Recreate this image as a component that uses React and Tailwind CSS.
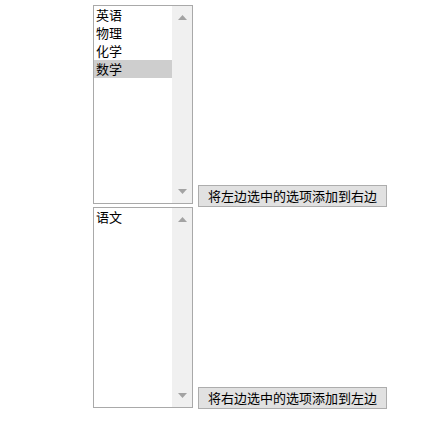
import React from "react";

const font = { fontFamily: '"Noto Sans CJK SC", "Microsoft YaHei", sans-serif' };

function ListBox({ items, selected, tall }) {
  return (
    <div
      className={
        "flex w-[100px] border border-[#a9a9a9] bg-white shrink-0 " +
        (tall ? "h-[201px] mb-[1px]" : "h-[199px] mb-[3px]")
      }
    >
      <div className="flex-1 flex flex-col">
        {items.map((it, i) => (
          <div
            key={it}
            className={
              "h-[18px] leading-[18px] pl-[2px] text-[13px] text-black " +
              (i === selected ? "bg-[#cecece]" : "")
            }
          >
            {it}
          </div>
        ))}
      </div>
      <div className="w-[20px] bg-[#f0f0f0] flex flex-col justify-between items-center py-[9px]">
        <svg width="9" height="5" viewBox="0 0 9 5">
          <polygon points="4.5,0 9,5 0,5" fill="#a3a3a3" />
        </svg>
        <svg width="9" height="5" viewBox="0 0 9 5">
          <polygon points="0,0 9,0 4.5,5" fill="#a3a3a3" />
        </svg>
      </div>
    </div>
  );
}

function Btn({ children }) {
  return (
    <button className="h-[22px] w-[189px] border border-[#adadad] bg-[#e1e1e1] text-[13px] leading-[20px] text-black text-center px-0">
      {children}
    </button>
  );
}

export default function App() {
  return (
    <div className="w-[431px] h-[437px] bg-white pl-[93px] pt-[5px]" style={font}>
      <div className="flex items-end gap-[5px]">
        <ListBox items={["英语", "物理", "化学", "数学"]} selected={3} />
        <Btn>将左边选中的选项添加到右边</Btn>
      </div>
      <div className="flex items-end gap-[5px]">
        <ListBox items={["语文"]} selected={-1} tall />
        <Btn>将右边选中的选项添加到左边</Btn>
      </div>
    </div>
  );
}
